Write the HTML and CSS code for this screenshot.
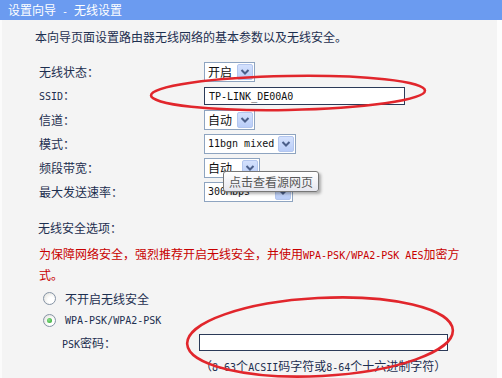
FILE: index.html
```html
<!DOCTYPE html>
<html lang="zh-CN">
<head>
<meta charset="utf-8">
<title>设置向导 - 无线设置</title>
<link rel="stylesheet" href="styles.css">
</head>
<body>
<div class="page">
  <div class="title">设置向导<span class="asc"> - </span>无线设置</div>
  <div class="content">
    <p class="intro">本向导页面设置路由器无线网络的基本参数以及无线安全。</p>
    <div class="form">
      <div class="label">无线状态：</div>
      <div class="sel w51"><span class="val">开启</span><span class="btn"><svg viewBox="0 0 14 14"><path d="M3.5 5 L7 8.5 L10.5 5"/></svg></span></div>

      <div class="label"><span class="asc">SSID</span>：</div>
      <div class="input w201"><span class="asc">TP-LINK_DE00A0</span></div>

      <div class="label">信道：</div>
      <div class="sel w51"><span class="val">自动</span><span class="btn"><svg viewBox="0 0 14 14"><path d="M3.5 5 L7 8.5 L10.5 5"/></svg></span></div>

      <div class="label">模式：</div>
      <div class="sel w92"><span class="val asc">11bgn mixed</span><span class="btn"><svg viewBox="0 0 14 14"><path d="M3.5 5 L7 8.5 L10.5 5"/></svg></span></div>

      <div class="label">频段带宽：</div>
      <div class="sel w56"><span class="val">自动</span><span class="btn"><svg viewBox="0 0 14 14"><path d="M3.5 5 L7 8.5 L10.5 5"/></svg></span></div>

      <div class="label">最大发送速率：</div>
      <div class="sel w89"><span class="val asc">300Mbps</span><span class="btn"><svg viewBox="0 0 14 14"><path d="M3.5 5 L7 8.5 L10.5 5"/></svg></span></div>
    </div>

    <div class="sec">无线安全选项：</div>
    <p class="warn">为保障网络安全，强烈推荐开启无线安全，并使用<span class="asc">WPA-PSK/WPA2-PSK AES</span>加密方<br>式。</p>

    <div class="opts">
      <div class="opt"><span class="radio"></span><span>不开启无线安全</span></div>
      <div class="opt"><span class="radio on"></span><span class="asc">WPA-PSK/WPA2-PSK</span></div>
      <div class="psk"><span><span class="asc">PSK</span>密码：</span><span class="input w249"></span></div>
      <div class="hint">（<span class="asc">8-63</span>个<span class="asc">ACSII</span>码字符或<span class="asc">8-64</span>个十六进制字符）</div>
    </div>
  </div>

  <svg class="marks" viewBox="0 0 502 378">
    <ellipse cx="288" cy="93" rx="137" ry="17" transform="rotate(-1 288 93)"/>
    <ellipse cx="320" cy="337" rx="133" ry="39" transform="rotate(-3 320 337)"/>
  </svg>
  <div class="tip">点击查看源网页</div>
</div>
</body>
</html>
```

FILE: styles.css
```css
* { box-sizing: border-box; }
html, body { margin: 0; padding: 0; }
body {
  width: 502px;
  height: 378px;
  overflow: hidden;
  background: #f4f4f4;
  font-family: "Noto Sans CJK SC", sans-serif;
  font-size: 12px;
  color: #1d2f50;
}
.page {
  position: relative;
  width: 502px;
  height: 378px;
  display: flex;
  flex-direction: column;
}
.asc {
  font-family: "DejaVu Sans Mono", monospace;
  font-size: 10px;
}
.title {
  flex: none;
  height: 20px;
  line-height: 20px;
  background: #6b9bf0;
  color: #fff;
  padding-left: 8px;
  white-space: pre;
}
.content {
  flex: 1;
  display: flex;
  flex-direction: column;
  background: #f4f4f4;
  border-left: 2px solid #fbfbfb;
  border-right: 5px solid #fdfdfd;
}
.intro {
  margin: 9px 0 0 33px;
  line-height: 16px;
}
.form {
  margin: 15px 0 0 37px;
  display: grid;
  grid-template-columns: 165px auto;
  grid-auto-rows: 24px;
  align-items: center;
  justify-items: start;
}
.label { line-height: 16px; }
.sel {
  display: flex;
  align-items: center;
  justify-content: space-between;
  height: 20px;
  background: #fff;
  border: 1px solid #8ea4c0;
  padding: 1px;
  color: #111;
}
.sel .val { padding-left: 2px; line-height: 16px; white-space: pre; }
.sel .btn {
  flex: none;
  width: 16px;
  height: 16px;
  background: linear-gradient(#d4e1fd, #b9cdf8);
  border: 1px solid #b3c6ee;
  border-radius: 2px;
  display: flex;
  align-items: center;
  justify-content: center;
}
.sel .btn svg { width: 14px; height: 14px; }
.sel .btn path { fill: none; stroke: #4b5f8a; stroke-width: 2; }
.w51 { width: 51px; }
.w56 { width: 56px; }
.w89 { width: 89px; }
.w92 { width: 92px; }
.input {
  display: flex;
  align-items: center;
  height: 18px;
  background: #fff;
  border: 1px solid #2b3a58;
  padding-left: 4px;
  color: #111;
}
.w201 { width: 201px; }
.w249 { width: 249px; height: 17px; }
.sec {
  margin: 16px 0 0 36px;
  line-height: 16px;
}
.warn {
  margin: 8px 0 0 37px;
  line-height: 19px;
  color: #c80000;
}
.opts {
  margin-top: 3px;
  display: flex;
  flex-direction: column;
}
.opt {
  height: 22px;
  display: flex;
  align-items: center;
  gap: 9px;
  padding-left: 41px;
}
.radio {
  width: 13px;
  height: 13px;
  border-radius: 50%;
  border: 1px solid #8593a5;
  background: radial-gradient(circle at 65% 65%, #ffffff 30%, #dcdcd6 100%);
  position: relative;
}
.radio.on::after {
  content: "";
  position: absolute;
  left: 3px;
  top: 3px;
  width: 5px;
  height: 5px;
  border-radius: 50%;
  background: radial-gradient(circle at 40% 40%, #8fe08f, #21a121);
}
.psk {
  height: 23px;
  display: grid;
  grid-template-columns: 137px 249px;
  align-items: center;
  padding-left: 60px;
}
.hint {
  height: 23px;
  line-height: 23px;
  padding-left: 198px;
  white-space: nowrap;
}
.marks {
  position: absolute;
  left: 0;
  top: 0;
  width: 502px;
  height: 378px;
  pointer-events: none;
}
.marks ellipse {
  fill: none;
  stroke: #e1262c;
  stroke-width: 2.6;
}
.tip {
  position: absolute;
  left: 223px;
  top: 171px;
  width: 96px;
  height: 21px;
  line-height: 19px;
  padding-left: 5px;
  color: #575757;
  background: linear-gradient(#ffffff, #e6e7ef);
  border: 1px solid #777;
  border-radius: 3px;
  box-shadow: 2px 2px 3px rgba(0, 0, 0, 0.3);
  white-space: nowrap;
}
```
